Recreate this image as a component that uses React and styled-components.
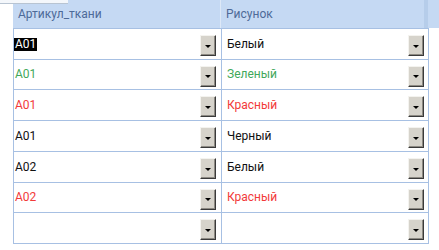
import React from "react";
import styled, { createGlobalStyle } from "styled-components";

const GlobalStyle = createGlobalStyle`
  html, body {
    margin: 0;
    padding: 0;
    background: #fff;
  }
  body {
    width: 439px;
    height: 250px;
    overflow: hidden;
    font-family: Roboto, "Noto Sans", sans-serif;
  }
`;

const Sheet = styled.div`
  position: relative;
  width: 439px;
  height: 250px;
  padding-left: 13px;
  box-sizing: border-box;
`;

const Tab = styled.div`
  position: absolute;
  left: 0;
  top: 0;
  width: 68px;
  height: 3px;
  background: #f4f7fb;
  border-bottom: 1px solid #b8c4d2;
`;

const HeaderRow = styled.div`
  display: grid;
  grid-template-columns: 208px 203px 4px 1fr;
  height: 28px;
  background: #c5d9f3;
`;

const HeaderCell = styled.div`
  display: flex;
  align-items: center;
  padding-left: ${(p) => p.$pad || 4}px;
  font-size: 12px;
  color: #4d6a98;
  border-right: ${(p) => (p.$sep ? "1px solid #dde8f7" : "none")};
`;

const Band = styled.div`
  background: #b6cdea;
`;

const Table = styled.div`
  width: 416px;
  border-left: 1px solid #a7c0e3;
  border-right: 1px solid #a7c0e3;
  border-bottom: 1px solid #a7c0e3;
  box-sizing: border-box;
`;

const Row = styled.div`
  display: grid;
  grid-template-columns: 208px 1fr;
  height: ${(p) => p.$h}px;
  border-top: 1px solid #a7c0e3;
  box-sizing: border-box;
`;

const Cell = styled.div`
  display: flex;
  align-items: center;
  justify-content: space-between;
  padding: 0 ${(p) => p.$right}px 0 ${(p) => p.$left}px;
  border-right: ${(p) => (p.$sep ? "1px solid #a7c0e3" : "none")};
  font-size: 12px;
  color: ${(p) => p.$color};
`;

const Value = styled.span`
  line-height: 13px;
  padding: 0 1px;
  background: ${(p) => (p.$selected ? "#000" : "transparent")};
  color: ${(p) => (p.$selected ? "#fff" : "inherit")};
`;

const DropButton = styled.div`
  width: 14px;
  height: 19px;
  margin-top: 3px;
  background: #d6d3cb;
  border-top: 1px solid #f4f3ef;
  border-left: 1px solid #f4f3ef;
  border-right: 1px solid #3a3a3a;
  border-bottom: 1px solid #3a3a3a;
  box-shadow: inset -1px -1px 0 #8d8a83;
  display: flex;
  align-items: center;
  justify-content: center;
  &::after {
    content: "";
    width: 0;
    height: 0;
    border-left: 3px solid transparent;
    border-right: 3px solid transparent;
    border-top: 3px solid #000;
    margin-top: 1px;
  }
`;

const colors = {
  black: "#111",
  green: "#3fa85a",
  red: "#f23a3a",
};

const rows = [
  { art: "A01", pic: "Белый", artColor: "black", picColor: "black", selected: true },
  { art: "A01", pic: "Зеленый", artColor: "green", picColor: "green" },
  { art: "A01", pic: "Красный", artColor: "red", picColor: "red" },
  { art: "A01", pic: "Черный", artColor: "black", picColor: "black" },
  { art: "A02", pic: "Белый", artColor: "black", picColor: "black" },
  { art: "A02", pic: "Красный", artColor: "red", picColor: "red" },
  { art: "", pic: "", artColor: "black", picColor: "black" },
];

const heights = [31, 30, 31, 31, 31, 30, 31];

const App = () => {
  return (
    <>
      <GlobalStyle />
      <Sheet>
        <Tab />
        <HeaderRow>
          <HeaderCell $sep $pad={5}>Артикул_ткани</HeaderCell>
          <HeaderCell $pad={5}>Рисунок</HeaderCell>
          <Band />
          <div />
        </HeaderRow>
        <Table>
          {rows.map((r, i) => (
            <Row key={i} $h={heights[i]}>
              <Cell $sep $left={0} $right={5} $color={colors[r.artColor]}>
                <Value $selected={r.selected}>{r.art}</Value>
                <DropButton />
              </Cell>
              <Cell $left={4} $right={4} $color={colors[r.picColor]}>
                <Value>{r.pic}</Value>
                <DropButton />
              </Cell>
            </Row>
          ))}
        </Table>
      </Sheet>
    </>
  );
};

export default App;
